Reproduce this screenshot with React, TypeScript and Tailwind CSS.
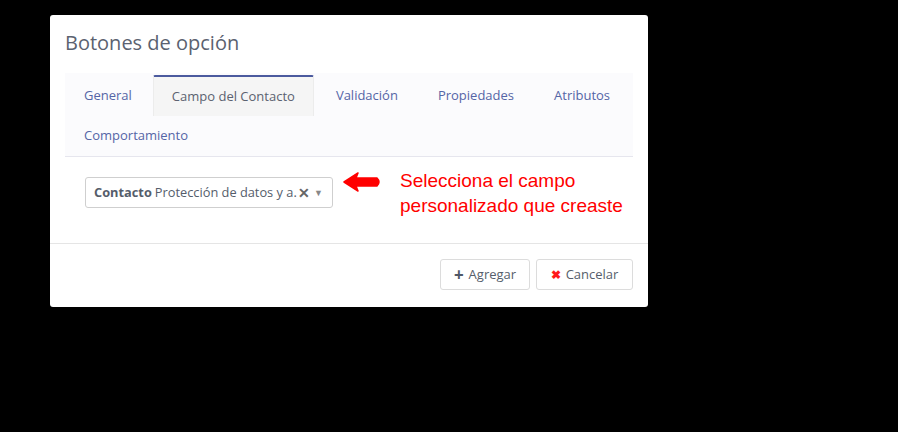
import React from 'react';

const tabs = ['General', 'Campo del Contacto', 'Validación', 'Propiedades', 'Atributos'];

const ArrowLeft: React.FC = () => (
  <svg width="40" height="20" viewBox="0 0 40 20" className="shrink-0">
    <path d="M2 10 L16 1 L14 6 L35 6 Q39 10 35 14 L14 14 L16 19 Z" fill="#ff0000" strokeLinejoin="round" stroke="#ff0000" strokeWidth="1.5" />
  </svg>
);

const App: React.FC = () => {
  return (
    <div className="w-[898px] h-[432px] bg-black pt-[15px] pl-[50px] font-['Open_Sans',sans-serif]">
      <div className="w-[598px] h-[292px] bg-white rounded-[3px] flex flex-col">
        {/* Header */}
        <div className="h-[58px] px-[15px] pt-[14px]">
          <h2 className="text-[20px] leading-[28px] text-[#5b6270]">Botones de opción</h2>
        </div>

        {/* Tabs */}
        <div className="mx-[15px] h-[84px] bg-[#fbfbfd] border-b border-[#e6e6ee] pt-[2px]">
          <div className="flex flex-nowrap whitespace-nowrap">
            {tabs.map((t, i) => (
              <div
                key={t}
                className={
                  i === 1
                    ? 'h-[41px] px-[18px] mx-[2px] flex items-center text-[13px] text-[#5b6270] bg-[#f5f5f5] border-t-2 border-[#4b5a9e] border-x border-x-[#ececec] rounded-t-[2px]'
                    : i === 0
                      ? 'h-[41px] px-[19px] flex items-center text-[13px] text-[#5565a6]'
                      : 'h-[41px] px-[20px] flex items-center text-[13px] text-[#5565a6]'
                }
              >
                {t}
              </div>
            ))}
          </div>
          <div className="h-[40px] px-[19px] flex items-center text-[13px] text-[#5565a6]">Comportamiento</div>
        </div>

        {/* Body */}
        <div className="h-[87px] px-[35px] pt-[20px] border-b border-[#e5e5e5] flex items-start">
          <div className="shrink-0 w-[248px] h-[31px] border border-[#cfcfcf] rounded-[3px] flex items-center pl-[8px] pr-[9px] text-[12.8px] text-[#555d6b] whitespace-nowrap overflow-hidden">
            <span className="font-bold">Contacto</span>
            <span className="ml-[3px]">Protección de datos y a.</span>
            <span className="ml-[1px] text-[14px] font-bold text-[#666] leading-none">✕</span>
            <span className="ml-auto text-[9px] text-[#888]">▼</span>
          </div>
          <div className="ml-[9px] mt-[-5px] shrink-0">
            <ArrowLeft />
          </div>
          <div className="ml-[18px] mt-[-9px] whitespace-nowrap text-[19px] leading-[25px] text-[#ff0000] font-['Liberation_Sans',Arial,sans-serif]">
            Selecciona el campo
            <br />
            personalizado que creaste
          </div>
        </div>

        {/* Footer */}
        <div className="flex-1 flex items-start justify-end gap-[6px] pt-[15px] pr-[15px]">
          <button className="h-[31px] w-[90px] border border-[#dcdcdc] rounded-[3px] flex items-center justify-center gap-[5px] text-[13px] text-[#555e6b]">
            <span className="text-[17px] leading-none font-bold text-[#4f5766]">+</span>
            Agregar
          </button>
          <button className="h-[31px] w-[97px] border border-[#dcdcdc] rounded-[3px] flex items-center justify-center gap-[5px] text-[13px] text-[#555e6b]">
            <span className="text-[12px] leading-none font-bold text-[#ff1a1a]">✖</span>
            Cancelar
          </button>
        </div>
      </div>
    </div>
  );
};

export default App;
